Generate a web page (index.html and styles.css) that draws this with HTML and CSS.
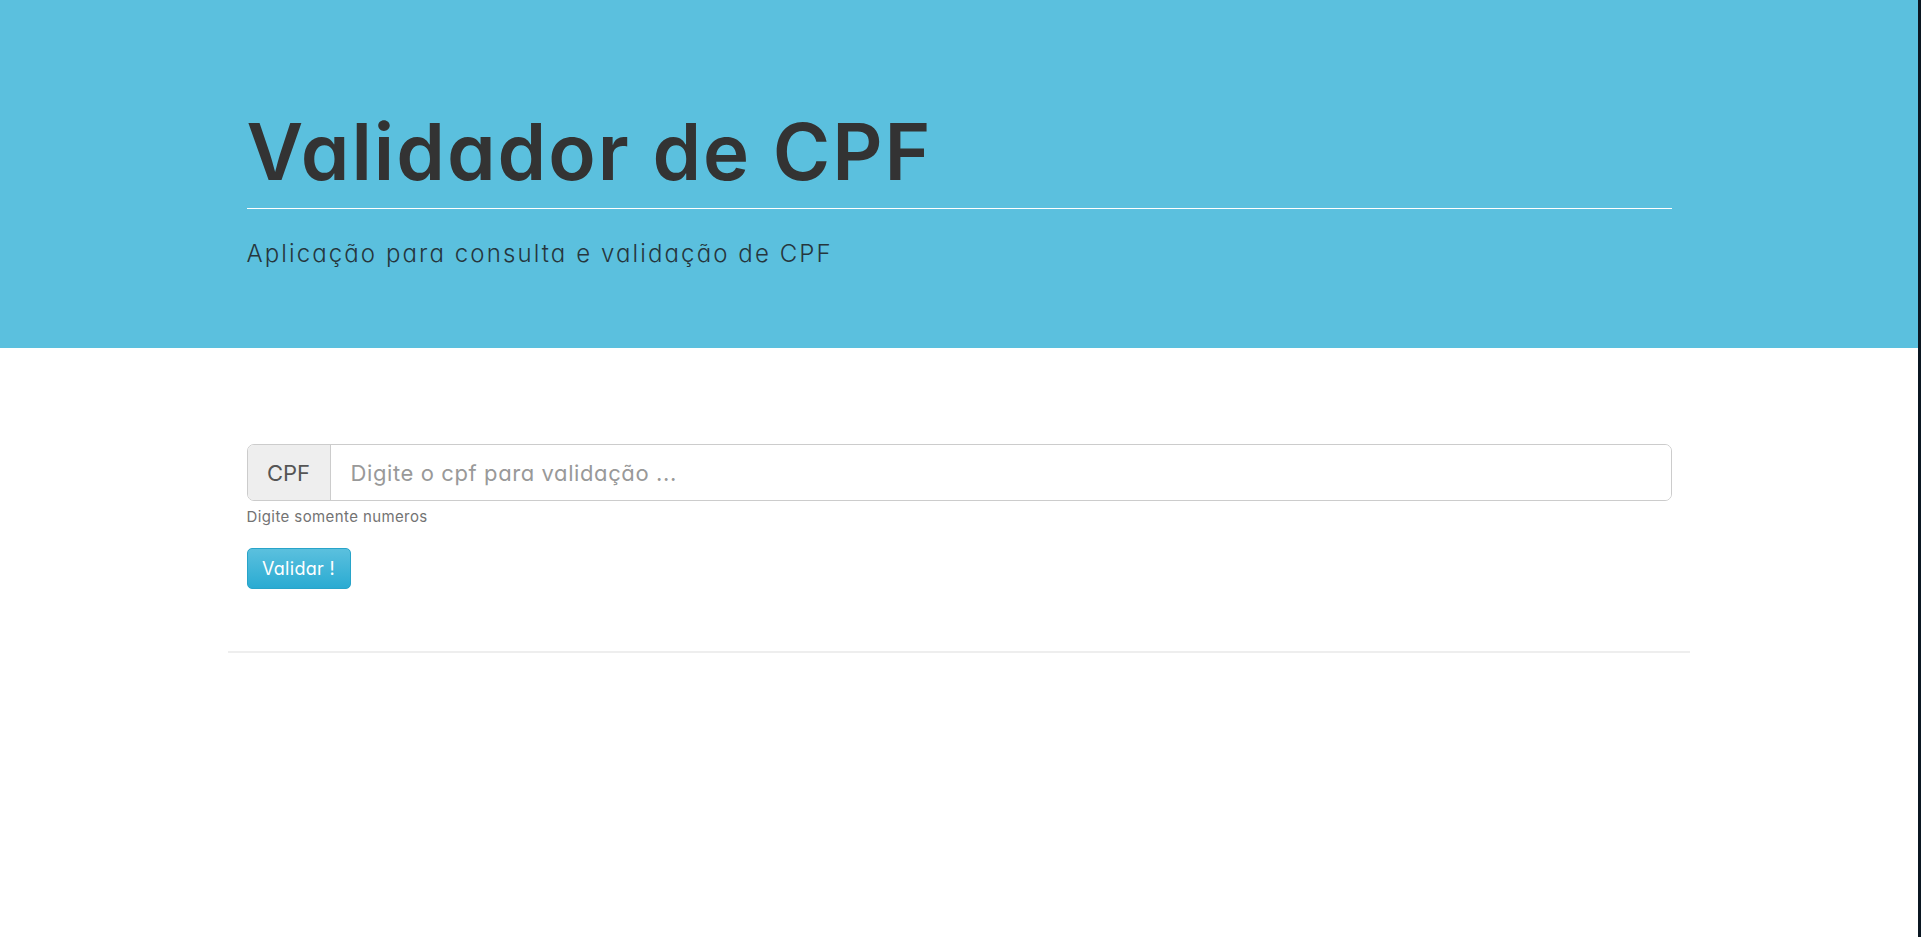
FILE: index.html
```html
<!DOCTYPE html>
<html lang="pt-BR">
<head>
<meta charset="utf-8">
<title>Validador de CPF</title>
<link rel="stylesheet" href="styles.css">
</head>
<body>
<div class="jumbotron">
  <div class="container">
    <h1 class="title">Validador de CPF</h1>
    <hr class="title-rule">
    <p class="lead">Aplicação para consulta e validação de CPF</p>
  </div>
</div>
<div class="main">
  <div class="container">
    <form class="cpf-form">
      <div class="input-group">
        <span class="addon">CPF</span>
        <input class="field" type="text" placeholder="Digite o cpf para validação ...">
      </div>
      <span class="help">Digite somente numeros</span>
      <button class="btn-info" type="button">Validar !</button>
    </form>
  </div>
  <hr class="footer-rule">
</div>
</body>
</html>
```
FILE: styles.css
```css
html {
  background: #0b1722;
}
body {
  margin: 0;
  width: 1918px;
  min-height: 100vh;
  background: #fff;
  font-family: Inter, "Open Sans", sans-serif;
  font-feature-settings: "cv11" 1;
  color: #333;
}
.container {
  width: 1425px;
  margin: 0 auto;
}
.jumbotron {
  background: #5bc0de;
  height: 348px;
  box-sizing: border-box;
  padding-top: 113px;
}
.title {
  margin: 0;
  font-size: 78px;
  font-weight: 600;
  line-height: 1;
  color: #333;
  letter-spacing: 2px;
}
.title-rule {
  margin: 17px 0 0;
  border: 0;
  border-top: 1px solid #fff;
  height: 0;
}
.lead {
  margin: 31px 0 0;
  font-size: 24px;
  font-weight: 300;
  line-height: 1.2;
  letter-spacing: 2.1px;
  color: #26363d;
}
.main {
  padding-top: 96px;
}
.cpf-form {
  display: flex;
  flex-direction: column;
  align-items: flex-start;
}
.input-group {
  display: flex;
  width: 100%;
  height: 57px;
  box-sizing: border-box;
  border: 1px solid #ccc;
  border-radius: 7px;
  overflow: hidden;
}
.addon {
  width: 83px;
  box-sizing: border-box;
  display: flex;
  align-items: center;
  justify-content: center;
  background: #eee;
  border-right: 1px solid #ccc;
  font-size: 22px;
  color: #555;
}
.field {
  flex: 1;
  border: 0;
  padding: 0 20px;
  font-family: inherit;
  font-feature-settings: "cv11" 1;
  font-size: 22px;
  letter-spacing: 0.6px;
  color: #555;
  outline: none;
}
.field::placeholder {
  color: #999;
}
.help {
  margin-top: 6px;
  font-size: 15px;
  letter-spacing: 0.4px;
  color: #737373;
}
.btn-info {
  margin-top: 22px;
  width: 104px;
  height: 41px;
  border: 1px solid #28a4c9;
  border-radius: 5px;
  background: linear-gradient(to bottom, #5bc0de 0%, #2aabd2 100%);
  color: #fff;
  font-family: inherit;
  font-feature-settings: "cv11" 1;
  font-size: 18px;
  letter-spacing: 0.3px;
  padding: 0;
  cursor: pointer;
}
.footer-rule {
  width: 1462px;
  margin: 62px auto 0;
  border: 0;
  border-top: 2px solid #eee;
  height: 0;
}
```
